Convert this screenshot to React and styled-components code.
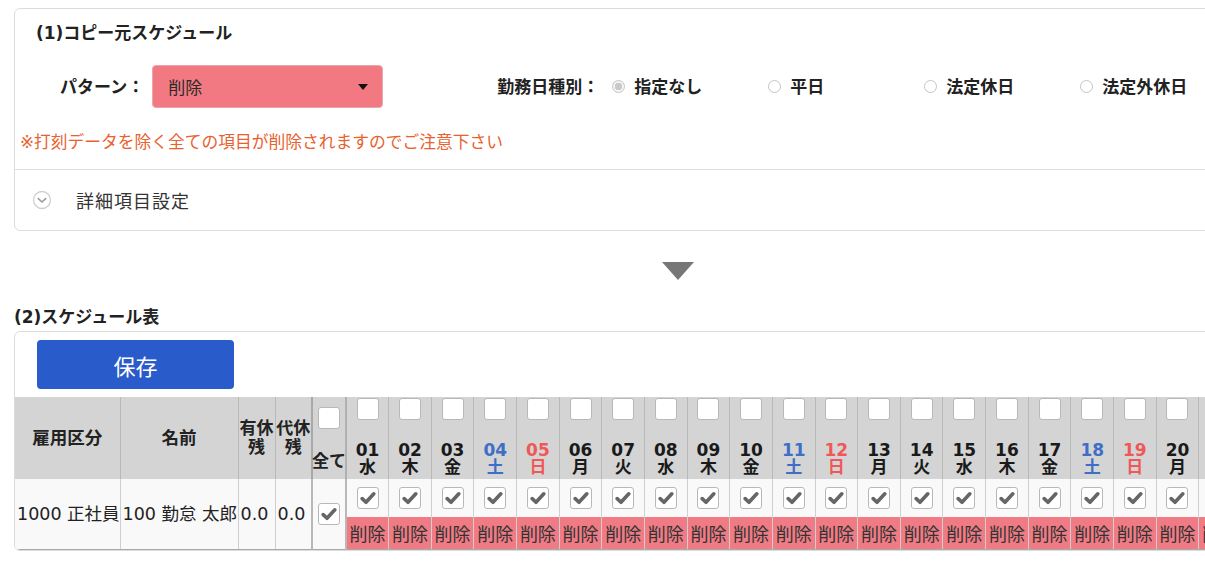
import styled, { createGlobalStyle } from 'styled-components';

const GlobalStyle = createGlobalStyle`
  html, body {
    margin: 0;
    padding: 0;
    overflow: hidden;
    background: #fff;
  }
  body {
    font-family: "DejaVu Sans", "Noto Sans CJK JP", sans-serif;
    color: #222;
  }
`;

const WEEK = ['水', '木', '金', '土', '日', '月', '火'];
const DAYS = Array.from({ length: 31 }, (_, i) => {
  const wd = WEEK[i % 7];
  return {
    num: String(i + 1).padStart(2, '0'),
    wd,
    tone: wd === '土' ? 'sat' : wd === '日' ? 'sun' : 'normal',
  };
});

const TONES = { sat: '#3f6ec6', sun: '#f05858', normal: '#1a1a1a' };

const Check = ({ checked }) => (
  <SCBox>
    {checked && (
      <svg width="16" height="14" viewBox="0 0 16 14">
        <path d="M2.2 7.6 L6 11.3 L13.8 2.8" fill="none" stroke="#666" strokeWidth="3.6" strokeLinejoin="round" strokeLinecap="round" />
      </svg>
    )}
  </SCBox>
);

const App = () => {
  return (
    <>
      <GlobalStyle />
      <SCPage>
        <SCCard>
          <SCCardTitle>(1)コピー元スケジュール</SCCardTitle>
          <SCPatternRow>
            <SCFieldLabel $gap={8}>パターン：</SCFieldLabel>
            <SCSelect>
              <span>削除</span>
              <SCCaret />
            </SCSelect>
            <SCRadioGroup>
              <SCFieldLabel $gap={13}>勤務日種別：</SCFieldLabel>
              {['指定なし', '平日', '法定休日', '法定外休日'].map((label, i) => (
                <SCRadioItem key={label}>
                  <SCRadio $checked={i === 0} />
                  {label}
                </SCRadioItem>
              ))}
            </SCRadioGroup>
          </SCPatternRow>
          <SCWarning>※打刻データを除く全ての項目が削除されますのでご注意下さい</SCWarning>
          <SCDetailRow>
            <svg width="20" height="20" viewBox="0 0 20 20">
              <circle cx="10" cy="10" r="8.5" fill="#fff" stroke="#cfcfcf" strokeWidth="1.3" />
              <path d="M6.3 8.6 L10 12 L13.7 8.6" fill="none" stroke="#9a9a9a" strokeWidth="1.6" strokeLinecap="round" strokeLinejoin="round" />
            </svg>
            <span>詳細項目設定</span>
          </SCDetailRow>
        </SCCard>

        <SCArrow />

        <SCSectionTitle>(2)スケジュール表</SCSectionTitle>
        <SCCard $clip>
          <SCSaveButton>保存</SCSaveButton>
          <SCTable>
            <colgroup>
              <col style={{ width: 105 }} />
              <col style={{ width: 118 }} />
              <col style={{ width: 37 }} />
              <col style={{ width: 37 }} />
              <col style={{ width: 34 }} />
              {DAYS.map((d) => (
                <col key={d.num} style={{ width: 42.65 }} />
              ))}
            </colgroup>
            <thead>
              <tr>
                <SCHeadCell>雇用区分</SCHeadCell>
                <SCHeadCell>名前</SCHeadCell>
                <SCHeadCell $narrow>有休<br />残</SCHeadCell>
                <SCHeadCell $narrow>代休<br />残</SCHeadCell>
                <SCHeadCell $strong>
                  <SCAllHead>
                    <Check />
                    <span>全て</span>
                  </SCAllHead>
                </SCHeadCell>
                {DAYS.map((d) => (
                  <SCHeadCell key={d.num}>
                    <SCDayHead $tone={d.tone}>
                      <Check />
                      <span className="num">{d.num}</span>
                      <span className="wd">{d.wd}</span>
                    </SCDayHead>
                  </SCHeadCell>
                ))}
              </tr>
            </thead>
            <tbody>
              <tr>
                <SCBodyCell>1000 正社員</SCBodyCell>
                <SCBodyCell>100 勤怠 太郎</SCBodyCell>
                <SCBodyCell>0.0</SCBodyCell>
                <SCBodyCell>0.0</SCBodyCell>
                <SCBodyCell $strong $center>
                  <Check checked />
                </SCBodyCell>
                {DAYS.map((d) => (
                  <SCBodyCell key={d.num} $day>
                    <SCDayBody>
                      <div className="check">
                        <Check checked />
                      </div>
                      <SCDeleteTag>削除</SCDeleteTag>
                    </SCDayBody>
                  </SCBodyCell>
                ))}
              </tr>
            </tbody>
          </SCTable>
        </SCCard>
      </SCPage>
    </>
  );
};

export default App;

const SCPage = styled.div`
  width: 1328px;
  padding: 8px 0 0 14px;
`;

const SCCard = styled.div`
  border: 1px solid #dcdcdc;
  border-radius: 6px;
  background: #fff;
  overflow: ${(p) => (p.$clip ? 'hidden' : 'visible')};
`;

const SCCardTitle = styled.div`
  padding: 12px 21px 0;
  font-size: 17px;
  font-weight: bold;
  line-height: 24px;
  color: #222;
`;

const SCPatternRow = styled.div`
  display: flex;
  align-items: center;
  margin-top: 20px;
  padding-left: 45px;
`;

const SCFieldLabel = styled.span`
  font-size: 17px;
  font-weight: bold;
  line-height: 24px;
  margin-right: ${(p) => p.$gap}px;
  white-space: nowrap;
`;

const SCSelect = styled.div`
  box-sizing: border-box;
  width: 231px;
  height: 43px;
  display: flex;
  align-items: center;
  justify-content: space-between;
  padding: 0 14px 0 15px;
  background: #f27982;
  border: 1px solid #e9a6ab;
  border-radius: 4px;
  font-size: 17px;
  color: #2a2a2a;
`;

const SCCaret = styled.span`
  width: 0;
  height: 0;
  border-left: 5px solid transparent;
  border-right: 5px solid transparent;
  border-top: 6px solid #111;
`;

const SCRadioGroup = styled.div`
  display: flex;
  align-items: center;
  margin-left: 114px;
`;

const SCRadioItem = styled.label`
  display: flex;
  align-items: center;
  gap: 9px;
  width: 156px;
  font-size: 17px;
  font-weight: bold;
  line-height: 24px;
  white-space: nowrap;
`;

const SCRadio = styled.span`
  box-sizing: border-box;
  width: 13px;
  height: 13px;
  border-radius: 50%;
  border: 1px solid #c4c4c4;
  background: ${(p) =>
    p.$checked ? 'radial-gradient(circle, #c9c9c9 0 3.5px, #f4f4f4 4px)' : '#fff'};
`;

const SCWarning = styled.div`
  padding: 22px 5px 15px;
  font-size: 16.75px;
  line-height: 24px;
  color: #e8612e;
`;

const SCDetailRow = styled.div`
  display: flex;
  align-items: center;
  gap: 24px;
  height: 60px;
  padding-left: 17px;
  border-top: 1px solid #dcdcdc;
  font-size: 18px;
  letter-spacing: 1px;
  color: #333;
`;

const SCArrow = styled.div`
  width: 0;
  height: 0;
  margin: 31px auto 0;
  border-left: 16px solid transparent;
  border-right: 16px solid transparent;
  border-top: 18px solid #777;
`;

const SCSectionTitle = styled.div`
  margin: 26px 0 3px;
  font-size: 17px;
  font-weight: bold;
  line-height: 22px;
  color: #222;
`;

const SCSaveButton = styled.button`
  display: block;
  width: 197px;
  height: 49px;
  margin: 8px 0 0 22px;
  border: none;
  border-radius: 4px;
  background: #2a5bcb;
  color: #fff;
  font-family: "Noto Sans CJK JP", sans-serif;
  font-size: 22px;
`;

const SCTable = styled.table`
  margin-top: 8px;
  border-collapse: collapse;
  table-layout: fixed;
  width: ${331 + 31 * 42.65}px;
`;

const SCHeadCell = styled.th`
  height: 82px;
  padding: 0;
  background: #d4d4d4;
  border-left: ${(p) => (p.$strong ? '2px solid #a8a8a8' : '1px solid #b9b9b9')};
  border-right: ${(p) => (p.$strong ? '2px solid #b0b0b0' : '1px solid #b9b9b9')};
  font-size: ${(p) => (p.$narrow ? '17px' : '17.5px')};
  font-weight: bold;
  line-height: ${(p) => (p.$narrow ? '19px' : '20px')};
  color: #222;
  vertical-align: middle;
  white-space: nowrap;
  &:first-child {
    border-left: none;
  }
`;

const SCAllHead = styled.div`
  height: 82px;
  display: flex;
  flex-direction: column;
  align-items: center;
  justify-content: space-between;
  padding: 10px 0 9px;
  box-sizing: border-box;
  font-size: 17px;
  line-height: 18px;
`;

const SCDayHead = styled.div`
  height: 82px;
  display: flex;
  flex-direction: column;
  align-items: center;
  padding: 1px 0 3px;
  box-sizing: border-box;
  font-size: 17px;
  color: ${(p) => TONES[p.$tone]};
  .num {
    margin-top: auto;
    line-height: 17px;
  }
  .wd {
    line-height: 17px;
  }
`;

const SCBodyCell = styled.td`
  height: 70px;
  padding: ${(p) => (p.$day ? '0' : '0 2px')};
  background: #f9f9f9;
  border-left: ${(p) => (p.$strong ? '2px solid #b8b8b8' : '1px solid #cfcfcf')};
  border-right: ${(p) => (p.$strong ? '2px solid #b8b8b8' : '1px solid #cfcfcf')};
  border-bottom: 1px solid #a9a9a9;
  font-size: 17.5px;
  line-height: 20px;
  color: #222;
  white-space: nowrap;
  overflow: hidden;
  text-align: ${(p) => (p.$center ? 'center' : 'left')};
  vertical-align: middle;
  &:first-child {
    border-left: none;
  }
`;

const SCDayBody = styled.div`
  display: flex;
  flex-direction: column;
  height: 70px;
  .check {
    height: 38px;
    display: flex;
    justify-content: center;
    padding-top: 8px;
    box-sizing: border-box;
  }
`;

const SCDeleteTag = styled.div`
  height: 32px;
  display: flex;
  align-items: center;
  justify-content: center;
  background: #f07b84;
  font-family: "Noto Sans CJK JP", sans-serif;
  font-size: 18px;
  color: #333;
  overflow: hidden;
`;

const SCBox = styled.span`
  box-sizing: border-box;
  width: 22px;
  height: 22px;
  display: inline-flex;
  align-items: center;
  justify-content: center;
  background: #fff;
  border: 1px solid #b8b8b8;
  border-radius: 3px;
  flex-shrink: 0;
`;
